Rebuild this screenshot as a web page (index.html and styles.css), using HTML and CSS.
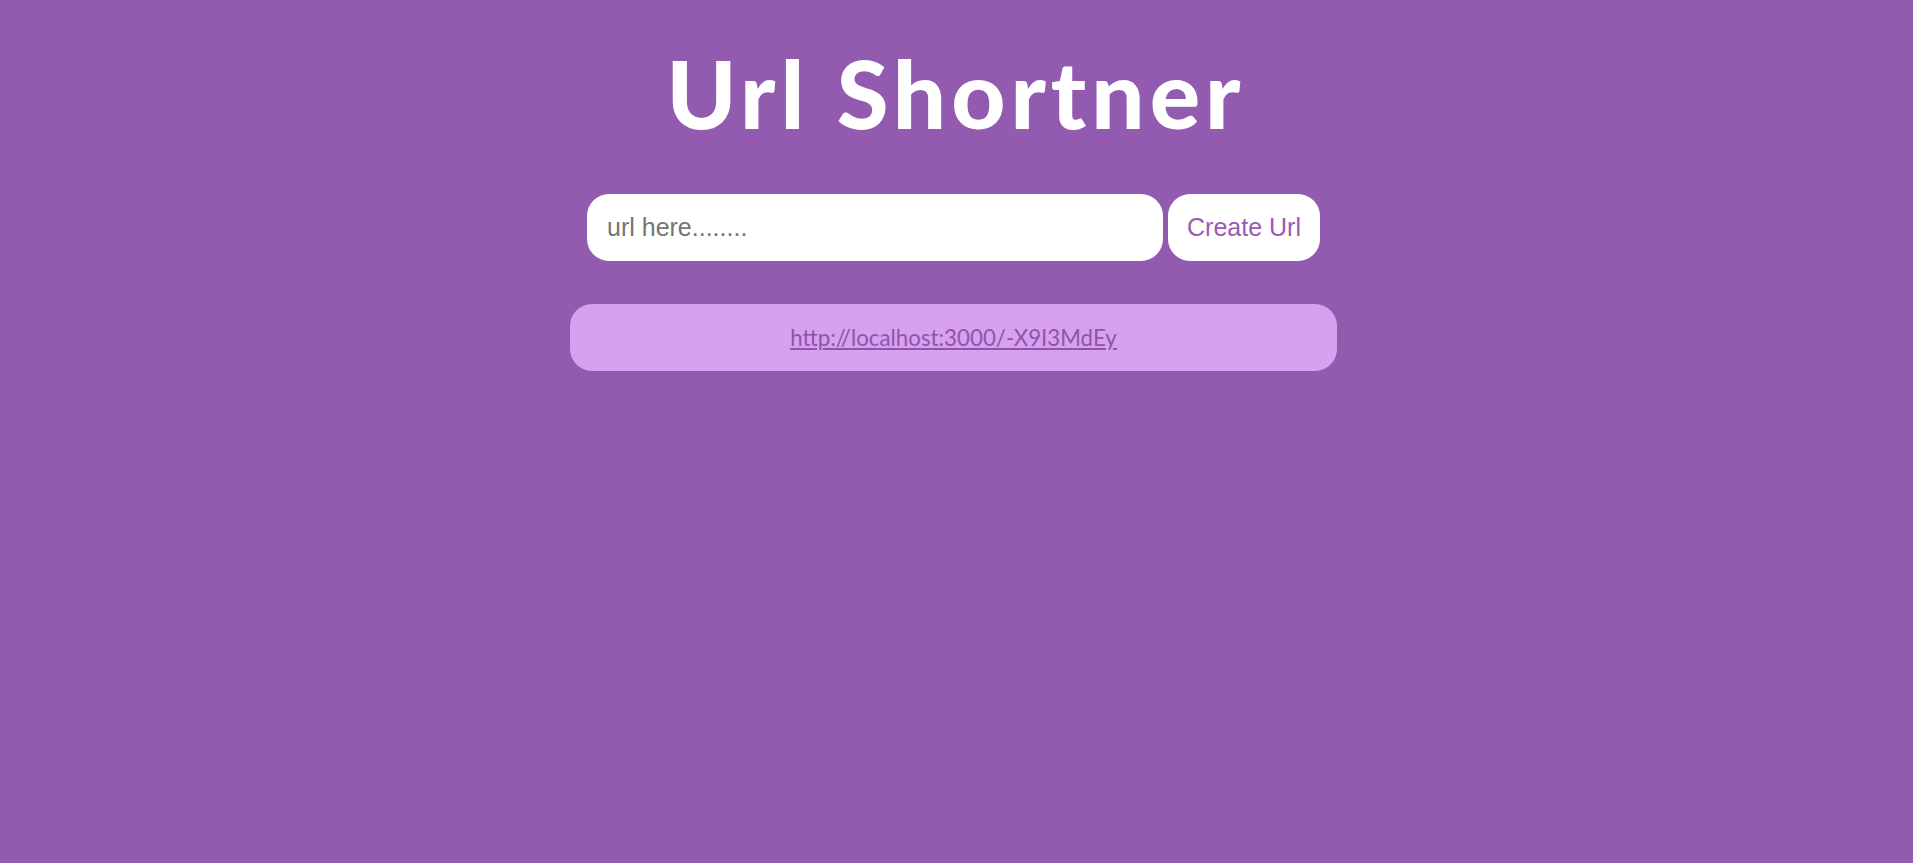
FILE: index.html
```html
<!DOCTYPE html>
<html lang="en">
<head>
<meta charset="utf-8">
<title>Url Shortner</title>
<link rel="stylesheet" href="styles.css">
</head>
<body>
<main class="page">
  <h1 class="title">Url Shortner</h1>
  <form class="form">
    <input class="url-input" type="text" placeholder="url here........">
    <button class="create-btn" type="button">Create Url</button>
  </form>
  <div class="result">
    <a class="short-link" href="#">http://localhost:3000/-X9I3MdEy</a>
  </div>
</main>
</body>
</html>
```
FILE: styles.css
```css
html, body {
  margin: 0;
  padding: 0;
  height: 100%;
}
body {
  background: #935bb0;
  font-family: "Liberation Sans", Arial, sans-serif;
}
.page {
  display: flex;
  flex-direction: column;
  align-items: center;
  padding-top: 46px;
  padding-right: 6px;
}
.title {
  margin: 0;
  font-family: Lato, "Open Sans", sans-serif;
  font-weight: 900;
  font-size: 94px;
  letter-spacing: 5px;
  text-indent: 5px;
  line-height: 1;
  color: #ffffff;
}
.form {
  display: flex;
  gap: 5px;
  margin: 54px 0 0 0;
}
.url-input {
  box-sizing: border-box;
  width: 576px;
  height: 67px;
  border: none;
  border-radius: 22px;
  padding: 0 20px;
  font-family: "Liberation Sans", Arial, sans-serif;
  font-size: 25px;
  color: #333;
  background: #fff;
  outline: none;
}
.url-input::placeholder {
  color: #757575;
}
.create-btn {
  box-sizing: border-box;
  width: 152px;
  height: 67px;
  border: none;
  border-radius: 22px;
  background: #fff;
  color: #9b59b6;
  font-family: "Liberation Sans", Arial, sans-serif;
  font-size: 25px;
  padding: 0;
}
.result {
  box-sizing: border-box;
  width: 767px;
  height: 67px;
  margin-top: 43px;
  border-radius: 22px;
  background: #d7a1f0;
  display: flex;
  align-items: center;
  justify-content: center;
}
.short-link {
  font-family: Lato, "Open Sans", sans-serif;
  font-size: 22.3px;
  color: #8e55aa;
  text-decoration: underline;
}
```
